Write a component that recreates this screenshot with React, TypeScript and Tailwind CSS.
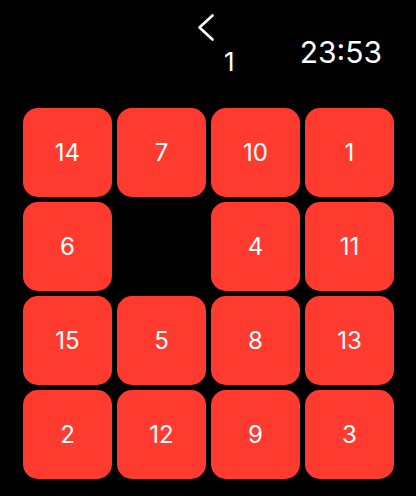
const tiles: (number | null)[] = [14, 7, 10, 1, 6, null, 4, 11, 15, 5, 8, 13, 2, 12, 9, 3];

export default function App() {
  return (
    <div className="w-[416px] h-[496px] bg-black text-white font-['Inter',sans-serif] overflow-hidden">
      <div className="flex h-[108px]">
        <div className="pl-[197px] pt-[14px] flex flex-col items-start">
          <svg width="18" height="27" viewBox="0 0 18 27" fill="none">
            <path d="M15.5 1.5 L2.5 13.5 L15.5 25.5" stroke="white" strokeWidth="2.6" strokeLinecap="round" strokeLinejoin="round" />
          </svg>
          <span className="ml-[27px] mt-[8px] text-[26px] leading-none">1</span>
        </div>
        <div className="ml-auto pr-[34px] pt-[37px] text-[30px] leading-none">23:53</div>
      </div>
      <div className="ml-[23px] grid grid-cols-[repeat(4,89px)] grid-rows-[repeat(4,89px)] gap-[5px]">
        {tiles.map((n, i) =>
          n === null ? (
            <div key={i} />
          ) : (
            <div key={i} className="rounded-[15px] bg-[#ff3b30] flex items-center justify-center text-[24px] leading-none">
              {n}
            </div>
          )
        )}
      </div>
    </div>
  );
}
